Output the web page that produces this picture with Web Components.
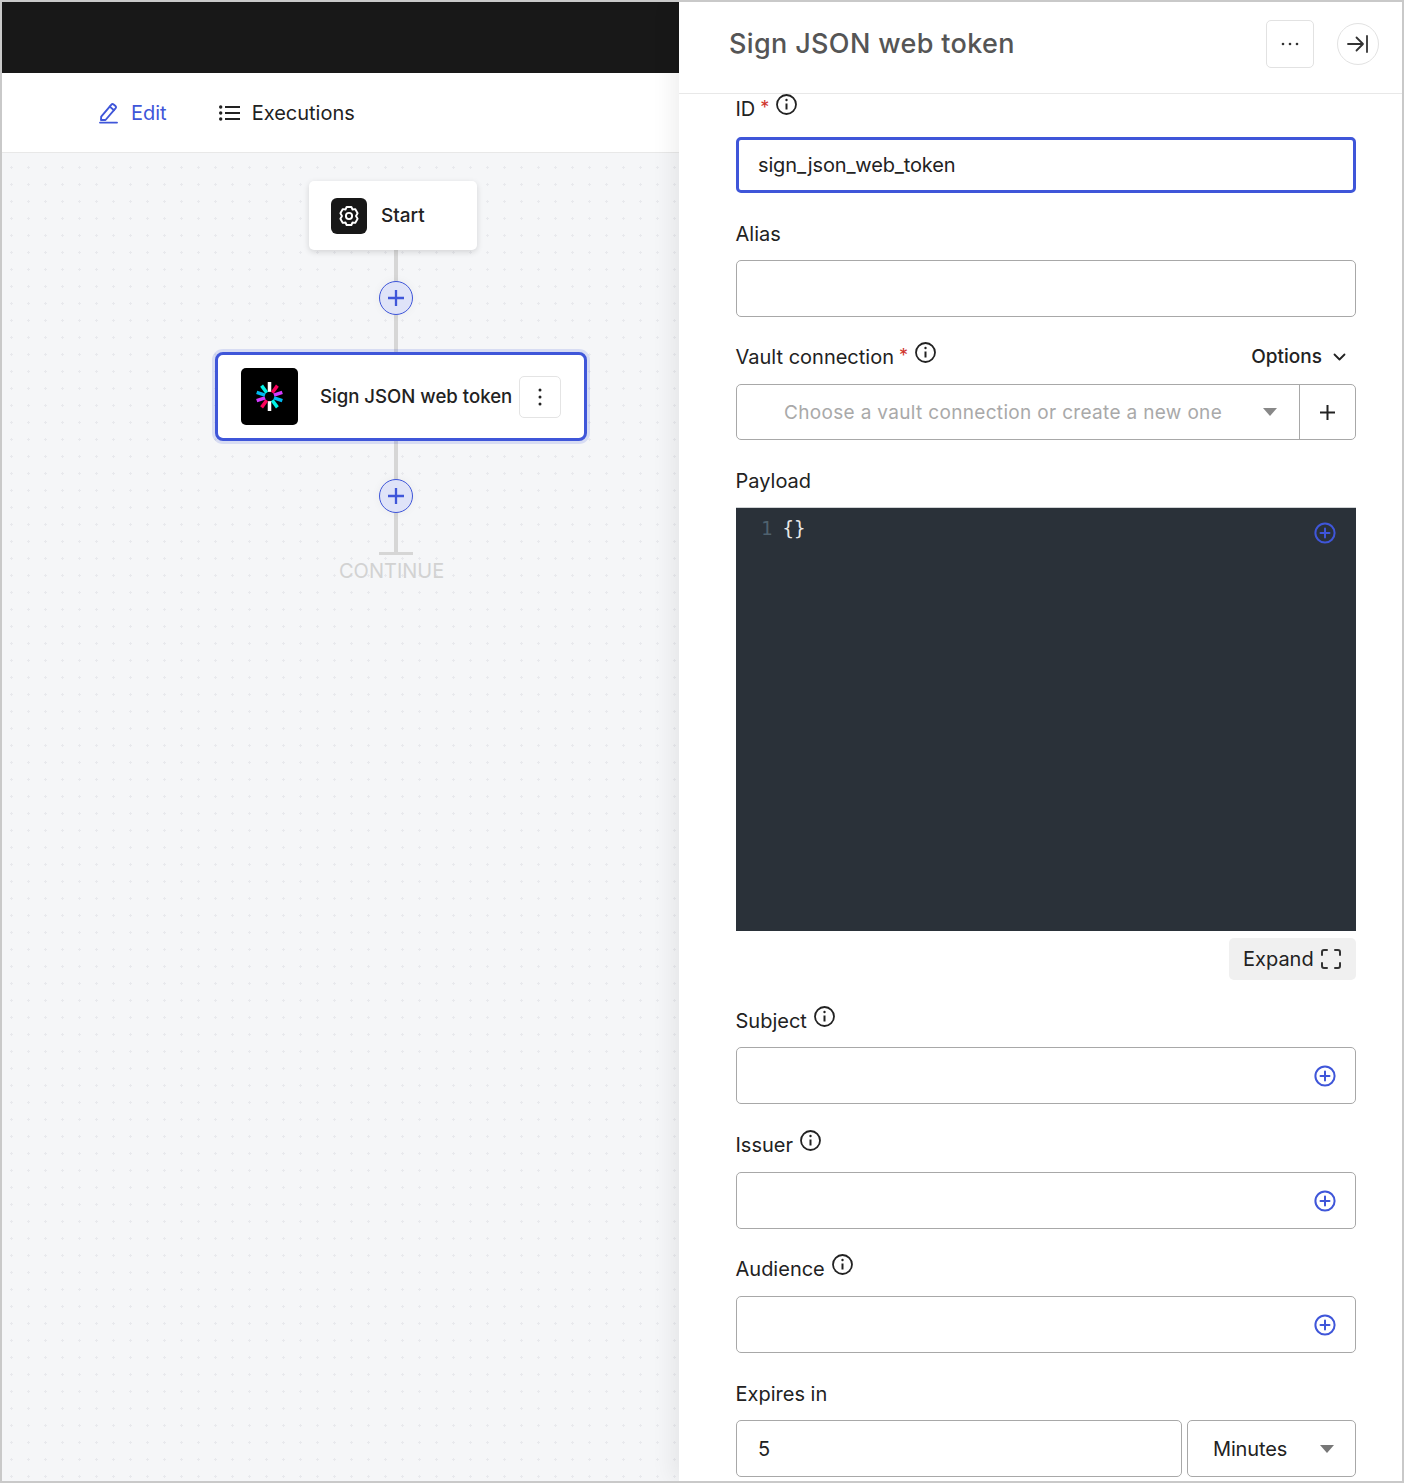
<!DOCTYPE html>
<html>
<head>
<meta charset="utf-8">
<title>Sign JSON web token</title>
<style>
    html, body {
        margin:0;
        padding:0;
        background:white;
    }
    body {
        font-family:Inter, "Liberation Sans", sans-serif;
        color:#222;
    }
</style>
</head>
<body>

<app-shell>
    <flow-side slot="left">
        <flow-tabs></flow-tabs>
        <flow-canvas></flow-canvas>
    </flow-side>
    <side-panel slot="right" heading="Sign JSON web token">
        <form-field label="ID" required info style="--label-pad:4px">
            <text-input value="sign_json_web_token" focused></text-input>
        </form-field>
        <form-field label="Alias">
            <text-input></text-input>
        </form-field>
        <form-field label="Vault connection" required info options style="--label-pad:2px">
            <vault-select placeholder="Choose a vault connection or create a new one"></vault-select>
        </form-field>
        <form-field label="Payload" style="margin-bottom:0">
            <code-editor></code-editor>
        </form-field>
        <form-field label="Subject" info style="margin-bottom:28px">
            <text-input add></text-input>
        </form-field>
        <form-field label="Issuer" info style="--label-pad:2px">
            <text-input add></text-input>
        </form-field>
        <form-field label="Audience" info style="--label-pad:2px">
            <text-input add></text-input>
        </form-field>
        <form-field label="Expires in">
            <expires-row value="5" unit="Minutes"></expires-row>
        </form-field>
    </side-panel>
</app-shell>

<script>
const PLUS_CIRCLE = `<svg width="22" height="22" viewBox="0 0 22 22" fill="none" stroke="#3f56d9" stroke-width="2" stroke-linecap="round"><circle cx="11" cy="11" r="9.6"/><path d="M11 6.5v9M6.5 11h9"/></svg>`;

class AppShell extends HTMLElement {
    constructor() {
        super();
        this.attachShadow({mode: 'open'}).innerHTML = `
<style>
    :host {
        display:flex;
        box-sizing:border-box;
        width:1404px;
        height:1483px;
        border:2px solid #c9c9c9;
        overflow:hidden;
        background:white;
    }
    ::slotted([slot=left]) { width:677px; flex:none; }
    ::slotted([slot=right]) { flex:1; min-width:0; }
</style>
<slot name="left"></slot>
<slot name="right"></slot>`;
    }
}

class FlowSide extends HTMLElement {
    constructor() {
        super();
        this.attachShadow({mode: 'open'}).innerHTML = `
<style>
    :host {
        display:flex;
        flex-direction:column;
        height:100%;
    }
    .topbar {
        height:71px;
        flex:none;
        background:#181818;
    }
</style>
<div class="topbar"></div>
<slot></slot>`;
    }
}

class FlowTabs extends HTMLElement {
    constructor() {
        super();
        this.attachShadow({mode: 'open'}).innerHTML = `
<style>
    :host {
        display:flex;
        align-items:center;
        flex:none;
        box-sizing:border-box;
        height:80px;
        padding-left:97px;
        background:white;
        border-bottom:1px solid #e8e8e8;
        font-size:20px;
        color:#222;
    }
    .tab {
        display:flex;
        align-items:center;
        gap:12px;
    }
    .edit {
        gap:13px;
        color:#3f56d9;
        margin-right:52px;
    }
    svg { display:block; }
</style>
<div class="tab edit">
    <svg width="19" height="22" viewBox="0 0 19 22" fill="none" stroke="#3f56d9" stroke-width="1.9" stroke-linejoin="round" stroke-linecap="round"><path d="M2.2 14.6 12.4 2.6a1.6 1.6 0 0 1 2.2-.2l1.9 1.6a1.6 1.6 0 0 1 .2 2.2L6.5 18H2z"/><path d="M10.8 4.6 15 8.2"/><path d="M1 20.6h17"/></svg>
    <span>Edit</span>
</div>
<div class="tab">
    <svg width="21" height="16" viewBox="0 0 21 16" fill="none" stroke="#222" stroke-width="2"><path d="M6 2h15M6 8h15M6 14h15"/><g fill="#222" stroke="none"><circle cx="1.7" cy="2" r="1.7"/><circle cx="1.7" cy="8" r="1.7"/><circle cx="1.7" cy="14" r="1.7"/></g></svg>
    <span>Executions</span>
</div>`;
    }
}

class FlowCanvas extends HTMLElement {
    constructor() {
        super();
        this.attachShadow({mode: 'open'}).innerHTML = `
<style>
    :host {
        display:block;
        position:relative;
        flex:1;
        background-color:#f5f6f8;
        background-image:radial-gradient(circle, #e8e9ed 1px, transparent 1.4px);
        background-size:17px 17px;
        background-position:1px 6px;
    }
    .line {
        position:absolute;
        left:392px;
        width:4px;
        background:#d6d6d6;
    }
    .bar {
        position:absolute;
        left:377px;
        top:399px;
        width:34px;
        height:3px;
        background:#d6d6d6;
    }
    .continue {
        position:absolute;
        left:337px;
        top:405px;
        font-size:20px;
        line-height:26px;
        color:#d2d2d2;
    }
    flow-node, add-button { position:absolute; }
</style>
<div class="line" style="top:97px;height:103px"></div>
<div class="line" style="top:288px;height:112px"></div>
<div class="bar"></div>
<div class="continue">CONTINUE</div>
<flow-node kind="start" style="left:307px;top:28px">Start</flow-node>
<add-button style="left:377px;top:128px"></add-button>
<flow-node kind="jwt" style="left:213px;top:199px">Sign JSON web token</flow-node>
<add-button style="left:377px;top:326px"></add-button>`;
    }
}

class FlowNode extends HTMLElement {
    constructor() {
        super();
        let jwt = this.getAttribute('kind') === 'jwt';
        let colors = ['#fff', '#fb015b', '#d63aff', '#00b9f1', '#00f2e6'];
        let spokes = '';
        for (let i = 0; i < 10; i++) {
            spokes += `<path d="M14 ${i % 5 === 0 ? 0 : 1}V9.500" stroke="${colors[i % 5]}" transform="rotate(${i * 36} 14 14)"/>`;
        }
        let start = `
<style>
    :host {
        display:flex;
        align-items:center;
        gap:14px;
        box-sizing:border-box;
        width:168px;
        height:69px;
        padding-left:22px;
        background:white;
        border-radius:5px;
        box-shadow:0 2px 6px rgba(0,0,0,0.14);
        font-size:19px;
        font-weight:500;
        color:#222;
    }
    .icon {
        width:36px;
        height:36px;
        border-radius:6px;
        background:#181818;
        display:flex;
        align-items:center;
        justify-content:center;
    }
</style>
<div class="icon">
    <svg width="22" height="22" viewBox="0 0 22 22" fill="none" stroke="white" stroke-width="1.9" stroke-linejoin="round"><path d="M8.6 2h4.8l1.1 2.5 2.7-.4 2.4 4.1-1.6 2.8 1.6 2.8-2.4 4.1-2.7-.4L13.4 20H8.6l-1.1-2.5-2.7.4-2.4-4.1L4 11 2.400 8.200l2.400-4.100 2.700.4z"/><circle cx="11" cy="11" r="3.100"/></svg>
</div>
<span><slot></slot></span>`;
        let selected = `
<style>
    :host {
        display:flex;
        align-items:center;
        box-sizing:border-box;
        width:372px;
        height:89px;
        padding-left:23px;
        background:white;
        border:3px solid #3f56d9;
        border-radius:8px;
        box-shadow:0 0 0 3px rgba(63,86,217,0.16);
        font-size:18.6px;
        font-weight:500;
        color:#222;
    }
    .icon {
        width:57px;
        height:57px;
        flex:none;
        border-radius:5px;
        background:#000;
        display:flex;
        align-items:center;
        justify-content:center;
        margin-right:22px;
    }
    .name {
        white-space:nowrap;
        margin-bottom:2px;
    }
    .menu {
        box-sizing:border-box;
        width:42px;
        height:42px;
        margin-left:auto;
        margin-right:23px;
        flex:none;
        border:1px solid #e4e4e4;
        border-radius:5px;
        display:flex;
        align-items:center;
        justify-content:center;
    }
</style>
<div class="icon">
    <svg width="29" height="29" viewBox="0 0 28 28" fill="none" stroke-width="3.400">${spokes}</svg>
</div>
<span class="name"><slot></slot></span>
<div class="menu">
    <svg width="4" height="18" viewBox="0 0 4 18" fill="#222"><circle cx="2" cy="2" r="1.500"/><circle cx="2" cy="9" r="1.500"/><circle cx="2" cy="16" r="1.500"/></svg>
</div>`;
        this.attachShadow({mode: 'open'}).innerHTML = jwt ? selected : start;
    }
}

class AddButton extends HTMLElement {
    constructor() {
        super();
        this.attachShadow({mode: 'open'}).innerHTML = `
<style>
    :host {
        display:flex;
        align-items:center;
        justify-content:center;
        box-sizing:border-box;
        width:34px;
        height:34px;
        border-radius:50%;
        background:#dfe3f8;
        border:1px solid #3f56d9;
        box-shadow:0 0 10px rgba(0,0,0,0.05);
    }
</style>
<svg width="16" height="16" viewBox="0 0 16 16" fill="none" stroke="#3f56d9" stroke-width="2.300"><path d="M8 0v16M0 8h16"/></svg>`;
    }
}

class SidePanel extends HTMLElement {
    constructor() {
        super();
        this.attachShadow({mode: 'open'}).innerHTML = `
<style>
    :host {
        display:flex;
        flex-direction:column;
        position:relative;
        height:100%;
        background:white;
        box-shadow:-6px 0 22px rgba(0,0,0,0.07);
        overflow:hidden;
    }
    header {
        display:flex;
        align-items:center;
        flex:none;
        box-sizing:border-box;
        height:92px;
        padding:0 23px 8px 50px;
        border-bottom:1px solid #e8e8e8;
    }
    h1 {
        flex:1;
        margin:0;
        font-size:27px;
        font-weight:500;
        letter-spacing:0.35px;
        color:#555;
    }
    .more {
        box-sizing:border-box;
        width:48px;
        height:48px;
        border:1px solid #e2e2e2;
        border-radius:5px;
        display:flex;
        align-items:center;
        justify-content:center;
        margin-right:23px;
    }
    .close {
        box-sizing:border-box;
        width:42px;
        height:42px;
        border:1px solid #e2e2e2;
        border-radius:50%;
        display:flex;
        align-items:center;
        justify-content:center;
    }
    .form {
        padding:3px 46px 0 56.5px;
    }
</style>
<header>
    <h1></h1>
    <div class="more">
        <svg width="18" height="4" viewBox="0 0 18 4" fill="#333"><circle cx="2" cy="2" r="1.300"/><circle cx="9" cy="2" r="1.300"/><circle cx="16" cy="2" r="1.300"/></svg>
    </div>
    <div class="close">
        <svg width="22" height="18" viewBox="0 0 22 18" fill="none" stroke="#333" stroke-width="1.800" stroke-linecap="round" stroke-linejoin="round"><path d="M1 9h15M9.500 2.500 16 9l-6.500 6.500M20 1v16"/></svg>
    </div>
</header>
<div class="form"><slot></slot></div>`;
        this.shadowRoot.querySelector('h1').textContent = this.getAttribute('heading');
    }
}

class FormField extends HTMLElement {
    constructor() {
        super();
        let info = this.hasAttribute('info') ? `<svg class="info" width="21" height="21" viewBox="0 0 21 21" fill="none" stroke="#222" stroke-width="1.800"><circle cx="10.500" cy="10.500" r="9.500"/><path d="M10.500 9.500v6" stroke-width="2"/><circle cx="10.500" cy="6" r="1.200" fill="#222" stroke="none"/></svg>` : '';
        let star = this.hasAttribute('required') ? `<span class="star">*</span>` : '';
        let options = this.hasAttribute('options') ? `<span class="options">Options <svg width="13" height="8" viewBox="0 0 13 8" fill="none" stroke="#222" stroke-width="1.800" stroke-linecap="round" stroke-linejoin="round"><path d="M1.500 1.500 6.500 6.500l5-5"/></svg></span>` : '';
        this.attachShadow({mode: 'open'}).innerHTML = `
<style>
    :host {
        display:block;
        margin-bottom:27px;
    }
    .label {
        display:flex;
        align-items:center;
        box-sizing:border-box;
        height:28px;
        padding-bottom:var(--label-pad, 0);
        margin-bottom:12px;
        font-size:20px;
        line-height:28px;
        color:#222;
        white-space:nowrap;
    }
    .star {
        color:#d0342c;
        font-size:18px;
        margin-left:5px;
        margin-bottom:2px;
    }
    .info {
        margin-left:7px;
        margin-bottom:9px;
    }
    .options {
        margin-left:auto;
        margin-right:10px;
        font-weight:500;
        font-size:19px;
        display:flex;
        align-items:center;
        gap:11px;
    }
</style>
<div class="label"><span class="text"></span>${star}${info}${options}</div>
<slot></slot>`;
        this.shadowRoot.querySelector('.text').textContent = this.getAttribute('label');
    }
}

class TextInput extends HTMLElement {
    constructor() {
        super();
        let value = this.getAttribute('value') || '';
        let add = this.hasAttribute('add') ? PLUS_CIRCLE : '';
        this.attachShadow({mode: 'open'}).innerHTML = `
<style>
    :host {
        display:flex;
        align-items:center;
        justify-content:space-between;
        box-sizing:border-box;
        height:57px;
        padding:0 19px 0 21.500px;
        background:white;
        border:1px solid #a8a8a8;
        border-radius:5px;
        font-size:20px;
        letter-spacing:-0.15px;
        color:#222;
    }
    :host([focused]) {
        height:56px;
        border:3px solid #3f56d9;
        padding-left:19.500px;
    }
    svg { display:block; }
</style>
<span>${value}</span>
${add}`;
    }
}

class VaultSelect extends HTMLElement {
    constructor() {
        super();
        this.attachShadow({mode: 'open'}).innerHTML = `
<style>
    :host {
        display:flex;
        box-sizing:border-box;
        height:56px;
        border:1px solid #a8a8a8;
        border-radius:5px;
        font-size:19px;
    }
    .select {
        flex:1;
        display:flex;
        align-items:center;
        padding:0 22px 0 47.500px;
        border-right:1px solid #a8a8a8;
    }
    .text {
        flex:1;
        color:#a9a9a9;
        letter-spacing:0.33px;
        white-space:nowrap;
    }
    .plus {
        box-sizing:border-box;
        width:55px;
        display:flex;
        align-items:center;
        justify-content:center;
    }
</style>
<div class="select">
    <span class="text"></span>
    <svg width="14" height="8" viewBox="0 0 14 8" fill="#888"><path d="M0 0h14L7 8z"/></svg>
</div>
<div class="plus">
    <svg width="15" height="15" viewBox="0 0 15 15" fill="none" stroke="#222" stroke-width="2"><path d="M7.500 0v15M0 7.500h15"/></svg>
</div>`;
        this.shadowRoot.querySelector('.text').textContent = this.getAttribute('placeholder');
    }
}

class CodeEditor extends HTMLElement {
    constructor() {
        super();
        this.attachShadow({mode: 'open'}).innerHTML = `
<style>
    :host {
        display:block;
    }
    .code {
        position:relative;
        box-sizing:border-box;
        height:424px;
        padding:8px 0 0 25.500px;
        background:#2a3139;
        border-top:1px solid #cfd2d4;
        font-family:"DejaVu Sans Mono", "Liberation Mono", monospace;
        font-size:19px;
        line-height:24px;
        color:#e8e8e8;
    }
    .num {
        color:#4f616e;
        margin-right:10px;
    }
    .add {
        position:absolute;
        right:20px;
        top:14px;
    }
    .foot {
        display:flex;
        justify-content:flex-end;
        margin-top:7px;
        margin-bottom:27px;
    }
    .expand {
        display:flex;
        align-items:center;
        gap:7px;
        box-sizing:border-box;
        height:42px;
        width:127px;
        padding-left:14px;
        background:#f0f0f0;
        border-radius:5px;
        font-size:20px;
        color:#222;
    }
</style>
<div class="code">
    <span class="num">1</span>{}
    <div class="add">${PLUS_CIRCLE}</div>
</div>
<div class="foot">
    <div class="expand">
        <span>Expand</span>
        <svg width="20" height="20" viewBox="0 0 20 20" fill="none" stroke="#333" stroke-width="2" stroke-linecap="round" stroke-linejoin="round"><path d="M1 6V3a2 2 0 0 1 2-2h3M14 1h3a2 2 0 0 1 2 2v3M19 14v3a2 2 0 0 1-2 2h-3M6 19H3a2 2 0 0 1-2-2v-3"/></svg>
    </div>
</div>`;
    }
}

class ExpiresRow extends HTMLElement {
    constructor() {
        super();
        this.attachShadow({mode: 'open'}).innerHTML = `
<style>
    :host {
        display:flex;
        gap:5px;
        font-size:20px;
        letter-spacing:-0.15px;
        color:#222;
    }
    .box {
        box-sizing:border-box;
        height:57px;
        border:1px solid #a8a8a8;
        border-radius:5px;
        display:flex;
        align-items:center;
    }
    .value {
        flex:1;
        padding-left:21.500px;
    }
    .unit {
        width:169px;
        padding:0 21px 0 25px;
        justify-content:space-between;
    }
</style>
<div class="box value"></div>
<div class="box unit">
    <span></span>
    <svg width="14" height="8" viewBox="0 0 14 8" fill="#777"><path d="M0 0h14L7 8z"/></svg>
</div>`;
        this.shadowRoot.querySelector('.value').textContent = this.getAttribute('value');
        this.shadowRoot.querySelector('.unit span').textContent = this.getAttribute('unit');
    }
}

window.customElements.define('add-button', AddButton);
window.customElements.define('flow-node', FlowNode);
window.customElements.define('flow-tabs', FlowTabs);
window.customElements.define('flow-canvas', FlowCanvas);
window.customElements.define('flow-side', FlowSide);
window.customElements.define('text-input', TextInput);
window.customElements.define('vault-select', VaultSelect);
window.customElements.define('code-editor', CodeEditor);
window.customElements.define('expires-row', ExpiresRow);
window.customElements.define('form-field', FormField);
window.customElements.define('side-panel', SidePanel);
window.customElements.define('app-shell', AppShell);
</script>
</body>
</html>
